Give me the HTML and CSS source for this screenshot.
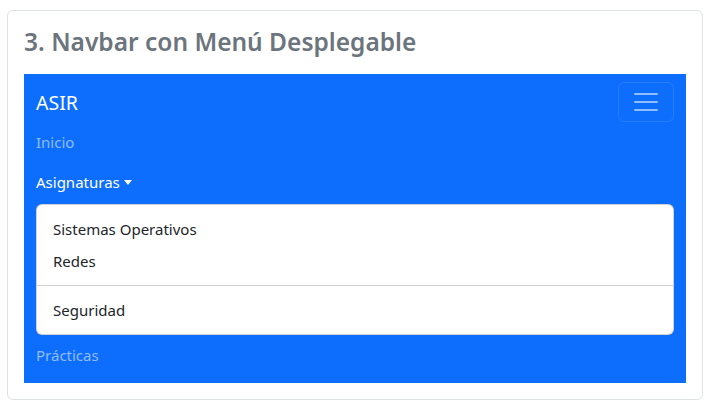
FILE: index.html
```html
<!DOCTYPE html>
<html lang="es">
<head>
<meta charset="utf-8">
<title>Navbar con Menú Desplegable</title>
<link rel="stylesheet" href="styles.css">
</head>
<body>
<div class="page">
  <section class="card">
    <h3 class="card-title">3. Navbar con Menú Desplegable</h3>
    <nav class="navbar">
      <div class="navbar-top">
        <a class="brand" href="#">ASIR</a>
        <button class="toggler" type="button" aria-label="Menú">
          <svg width="30" height="30" viewBox="0 0 30 30"><path d="M4 7h22M4 15h22M4 23h22" stroke="rgba(255,255,255,0.55)" stroke-width="2" stroke-linecap="round"/></svg>
        </button>
      </div>
      <ul class="nav">
        <li><a class="nav-link" href="#">Inicio</a></li>
        <li>
          <a class="nav-link show" href="#">Asignaturas<span class="caret"></span></a>
          <ul class="dropdown">
            <li><a class="dropdown-item" href="#">Sistemas Operativos</a></li>
            <li><a class="dropdown-item" href="#">Redes</a></li>
            <li><hr class="divider"></li>
            <li><a class="dropdown-item" href="#">Seguridad</a></li>
          </ul>
        </li>
        <li><a class="nav-link" href="#">Prácticas</a></li>
      </ul>
    </nav>
  </section>
</div>
</body>
</html>
```

FILE: styles.css
```css
* { box-sizing: border-box; }
html, body { margin: 0; padding: 0; background: #fff; }
body {
  font-family: "Noto Sans", "Open Sans", sans-serif;
  font-size: 15px;
  line-height: 1.5;
  color: #212529;
}
.page {
  padding: 10px 22px 0 7px;
}
.card {
  border: 1px solid #dee2e6;
  border-radius: 6px;
  padding: 16px;
  height: 390px;
}
.card-title {
  margin: 0 0 17px 0;
  font-size: 24.5px;
  line-height: 30px;
  font-weight: 600;
  color: #6c757d;
}
.navbar {
  background: #0d6efd;
  padding: 8px 12px;
}
.navbar-top {
  display: flex;
  justify-content: space-between;
  align-items: center;
}
.brand {
  font-size: 19.5px;
  line-height: 30px;
  padding: 6px 0 4px;
  color: #fff;
  text-decoration: none;
}
.toggler {
  width: 56px;
  height: 40px;
  padding: 4px 12px;
  background: transparent;
  border: 1px solid rgba(255,255,255,0.1);
  border-radius: 6px;
  display: flex;
  align-items: center;
  justify-content: center;
}
.toggler svg { display: block; }
.nav {
  list-style: none;
  margin: 0;
  padding: 0;
}
.nav-link {
  display: block;
  padding: 8px 0;
  line-height: 24px;
  color: rgba(255,255,255,0.55);
  text-decoration: none;
}
.nav-link.show { color: #fff; }
.caret {
  display: inline-block;
  margin-left: 4px;
  vertical-align: 3px;
  border-top: 5px solid #fff;
  border-left: 4.5px solid transparent;
  border-right: 4.5px solid transparent;
}
.dropdown {
  list-style: none;
  margin: 2px 0 0 0;
  padding: 8px 0 8px;
  background: #fff;
  border: 1px solid rgba(0,0,0,0.175);
  border-radius: 6px;
}
.dropdown-item {
  display: block;
  padding: 4px 16px;
  line-height: 24px;
  color: #212529;
  text-decoration: none;
}
.divider {
  margin: 8px 0;
  border: 0;
  border-top: 1px solid rgba(0,0,0,0.175);
}
```
